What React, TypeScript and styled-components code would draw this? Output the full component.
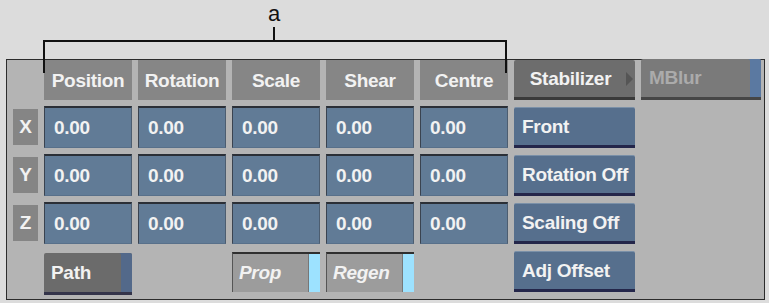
import styled, { createGlobalStyle } from "styled-components";

const GlobalStyle = createGlobalStyle`
  body {
    margin: 0;
    background: #dcdcdc;
    font-family: "Liberation Sans", Arial, sans-serif;
  }
`;

const columns = ["Position", "Rotation", "Scale", "Shear", "Centre"];
const axes = [
  { axis: "X", action: "Front" },
  { axis: "Y", action: "Rotation Off" },
  { axis: "Z", action: "Scaling Off" },
];

const App = () => {
  return (
    <Figure>
      <GlobalStyle />
      <CalloutLabel>a</CalloutLabel>
      <Bracket width="769" height="80" viewBox="0 0 769 80">
        <path d="M44 73 V41 H506 V73" fill="none" stroke="#111" strokeWidth="2" />
        <path d="M274 27 V41" stroke="#111" strokeWidth="2" />
      </Bracket>
      <Panel>
        <Spacer />
        {columns.map((name) => (
          <HeaderTile key={name}>{name}</HeaderTile>
        ))}
        <StabilizerButton>Stabilizer</StabilizerButton>
        <MBlurButton>MBlur</MBlurButton>

        {axes.map(({ axis, action }) => (
          <Row key={axis}>
            <AxisLabel>{axis}</AxisLabel>
            {columns.map((name) => (
              <Field key={name}>0.00</Field>
            ))}
            <ActionButton>{action}</ActionButton>
            <Spacer />
          </Row>
        ))}

        <Spacer />
        <PathButton>Path</PathButton>
        <Spacer />
        <Toggle>Prop</Toggle>
        <Toggle>Regen</Toggle>
        <Spacer />
        <ActionButton>Adj Offset</ActionButton>
        <Spacer />
      </Panel>
    </Figure>
  );
};

export default App;

const Figure = styled.div`
  position: relative;
  width: 769px;
  height: 303px;
  padding-top: 59px;
  box-sizing: border-box;
`;

const CalloutLabel = styled.span`
  position: absolute;
  left: 268px;
  top: 3px;
  font-family: "Liberation Sans", Arial, sans-serif;
  font-size: 22px;
  line-height: 1;
  color: #111;
`;

const Bracket = styled.svg`
  position: absolute;
  left: 0;
  top: 0;
  z-index: 2;
  pointer-events: none;
`;

const Panel = styled.div`
  margin-left: 6px;
  width: 759px;
  height: 241px;
  box-sizing: border-box;
  border: 1px solid #2c2c2c;
  background: #b4b4b4;
  padding: 0 0 0 6px;
  display: grid;
  grid-template-columns: 25px repeat(5, 88px) 121px 120px;
  grid-template-rows: 40px repeat(4, 42px);
  column-gap: 6px;
  row-gap: 6px;
  font-size: 19px;
  letter-spacing: -0.3px;
  font-weight: bold;
  color: #f2f2f2;
`;

const Row = styled.div`
  display: contents;
`;

const Spacer = styled.div``;

const Tile = styled.div`
  display: flex;
  align-items: center;
  box-sizing: border-box;
  white-space: nowrap;
`;

const HeaderTile = styled(Tile)`
  justify-content: center;
  background: #868686;
  padding-top: 1px;
`;

const AxisLabel = styled(Tile)`
  justify-content: center;
  align-self: center;
  height: 36px;
  background: #858585;
  margin-top: -1px;
`;

const Field = styled(Tile)`
  padding-left: 9px;
  background: #617b96;
  border-top: 2px solid #2b2f36;
  border-left: 1px solid #3a4350;
  border-right: 1px solid #4c5d70;
  border-bottom: 1px solid #58708a;
`;

const ActionButton = styled(Tile)`
  padding-left: 8px;
  margin-top: 1px;
  background: #566f8d;
  border-top: 1px solid #7a90a8;
  border-bottom: 3px solid #24264a;
  border-radius: 2px 2px 0 0;
`;

const StabilizerButton = styled(Tile)`
  position: relative;
  justify-content: center;
  padding-right: 8px;
  background: #6d6d6d;
  border-bottom: 3px solid #3a3a3a;
  border-radius: 2px 2px 0 0;

  &::after {
    content: "";
    position: absolute;
    right: 2px;
    top: 12px;
    border-left: 7px solid #555;
    border-top: 7px solid transparent;
    border-bottom: 7px solid transparent;
  }
`;

const MBlurButton = styled(Tile)`
  padding-left: 8px;
  margin-top: -1px;
  background: #7a7a7a;
  color: #ababab;
  border-bottom: 3px solid #464646;
  box-shadow: inset -11px 0 0 #5b79a1;
  border-radius: 2px 2px 0 0;
`;

const PathButton = styled(Tile)`
  padding-left: 7px;
  margin-top: 3px;
  margin-bottom: -3px;
  background: #6b6b6b;
  border-bottom: 3px solid #34344a;
  box-shadow: inset -11px 0 0 #53698a;
  border-radius: 2px 2px 0 0;
`;

const Toggle = styled(Tile)`
  padding-left: 6px;
  margin-top: 2px;
  background: #9c9c9c;
  font-style: italic;
  border-top: 2px solid #2f2f2f;
  border-left: 1px solid #555;
  box-shadow: inset -11px 0 0 #9de2ff, inset -12px 0 0 #777;
`;
